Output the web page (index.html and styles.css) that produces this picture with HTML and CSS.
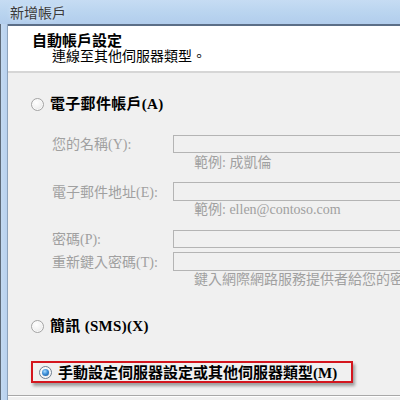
FILE: index.html
```html
<!DOCTYPE html>
<html lang="zh-Hant">
<head>
<meta charset="utf-8">
<link rel="stylesheet" href="styles.css">
</head>
<body>
<div class="window">
  <div class="titlebar">新增帳戶</div>
  <div class="frame">
    <div class="side"></div>
    <div class="client">
      <div class="header">
        <div class="h-title">自動帳戶設定</div>
        <div class="h-sub">連線至其他伺服器類型。</div>
      </div>
      <div class="content">
        <div class="radio-row r1"><span class="radio"></span><span class="rlabel">電子郵件帳戶(A)</span></div>
        <div class="form">
          <div class="frow f-name"><span class="flabel">您的名稱(Y):</span><span class="input"></span></div>
          <div class="hint h1">範例: 成凱倫</div>
          <div class="frow f-mail"><span class="flabel">電子郵件地址(E):</span><span class="input"></span></div>
          <div class="hint h2">範例: ellen@contoso.com</div>
          <div class="frow f-pw"><span class="flabel">密碼(P):</span><span class="input"></span></div>
          <div class="frow f-pw2"><span class="flabel">重新鍵入密碼(T):</span><span class="input"></span></div>
          <div class="hint h3">鍵入網際網路服務提供者給您的密碼。</div>
        </div>
        <div class="radio-row r2"><span class="radio"></span><span class="rlabel">簡訊 (SMS)(X)</span></div>
        <div class="highlight">
          <div class="radio-row r3"><span class="radio checked"></span><span class="rlabel">手動設定伺服器設定或其他伺服器類型(M)</span></div>
        </div>
        <div class="bottom-line"></div>
      </div>
    </div>
  </div>
</div>
</body>
</html>
```

FILE: styles.css
```css
html, body {
  margin: 0;
  padding: 0;
}
body {
  width: 400px;
  height: 400px;
  overflow: hidden;
  font-family: "Liberation Serif", "Noto Sans CJK TC", serif;
  font-size: 14px;
  color: #000;
}
.window {
  width: 400px;
  height: 400px;
  display: flex;
  flex-direction: column;
  background: #f0f0f0;
}
.titlebar {
  height: 24px;
  flex: none;
  box-sizing: border-box;
  padding: 3px 0 0 10px;
  line-height: 18px;
  font-size: 14px;
  color: #3a3a3a;
  font-family: "Noto Sans CJK TC", sans-serif;
  background: linear-gradient(180deg, #c6dcf3 0%, #b9d4ef 55%, #b2cdec 100%);
  text-shadow: 0 0 4px #e4eefa;
}
.frame {
  flex: 1;
  display: flex;
  min-height: 0;
}
.side {
  width: 6px;
  flex: none;
  border-left: 1px solid #5e6a78;
  border-right: 1px solid #8da3bc;
  background: linear-gradient(90deg, #c3d9f1, #b8d1ee);
}
.client {
  flex: 1;
  display: flex;
  flex-direction: column;
  min-width: 0;
  overflow: hidden;
}
.header {
  flex: none;
  background: #fff;
  border-top: 2px solid #5b6e87;
  border-bottom: 2px solid #d6d6d6;
  padding: 6px 0 8px 24px;
  height: 31px;
  display: flex;
  flex-direction: column;
  gap: 1px;
}
.h-title {
  font-weight: bold;
  font-size: 15px;
  line-height: 15px;
  font-family: "Noto Sans CJK TC", sans-serif;
}
.h-sub {
  padding-left: 20px;
  font-size: 14px;
  line-height: 15px;
  font-family: "Noto Sans CJK TC", sans-serif;
}
.content {
  flex: 1;
  padding-left: 23px;
  display: flex;
  flex-direction: column;
}
.radio-row {
  display: flex;
  align-items: center;
  gap: 6px;
  height: 16px;
  white-space: nowrap;
}
.rlabel {
  font-weight: bold;
  font-size: 15px;
  line-height: 16px;
  letter-spacing: 0.3px;
}
.r1 { margin-top: 23px; }
.r2 { margin-top: 30px; }
.radio {
  width: 11px;
  height: 11px;
  flex: none;
  border-radius: 50%;
  border: 1px solid #a4a4a4;
  background: radial-gradient(circle at 40% 35%, #ffffff 0%, #f2f2f2 50%, #d6d6d6 100%);
  box-shadow: inset 0 0 0 1px #fafafa;
  position: relative;
}
.radio.checked {
  border-color: #6f7f90;
}
.radio.checked::after {
  content: "";
  position: absolute;
  left: 2px;
  top: 2px;
  width: 7px;
  height: 7px;
  border-radius: 50%;
  background: radial-gradient(circle at 40% 35%, #a9dcff 0%, #3d8fd8 45%, #154f8e 100%);
}
.form {
  padding-left: 21px;
  display: flex;
  flex-direction: column;
  color: #a0a0a0;
  white-space: nowrap;
}
.frow {
  display: flex;
  align-items: center;
  height: 18px;
}
.flabel {
  width: 121px;
  flex: none;
  font-size: 14px;
  line-height: 16px;
  position: relative;
  top: 1px;
}
.input {
  flex: none;
  width: 260px;
  height: 100%;
  box-sizing: border-box;
  border: 1px solid #b4b4b4;
  background: #f0f0f0;
}
.hint {
  padding-left: 142px;
  font-size: 14px;
  line-height: 16px;
  height: 16px;
}
.f-name { margin-top: 23px; }
.h1 { margin-top: 2px; }
.f-mail { margin-top: 11px; height: 19px; }
.h2 { margin-top: 1px; }
.f-pw { margin-top: 12px; }
.f-pw2 { margin-top: 4px; height: 19px; }
.h3 { margin-top: 1px; }
.highlight {
  margin-top: 27px;
  width: 322px;
  height: 22px;
  box-sizing: border-box;
  border: 2px solid #d4161e;
  box-shadow: 2px 3px 3px rgba(0, 0, 0, 0.35);
  padding: 1px 0 0 6px;
  display: flex;
  align-items: center;
}
.r3 .rlabel { letter-spacing: 0; }
.bottom-line {
  margin-top: 12px;
  margin-left: -23px;
  height: 1px;
  background: #a8a8a8;
  border-bottom: 1px solid #ffffff;
}
```
